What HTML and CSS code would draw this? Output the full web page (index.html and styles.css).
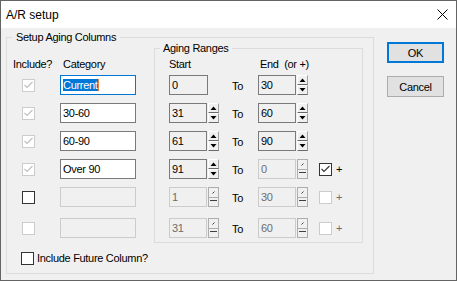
FILE: index.html
```html
<!DOCTYPE html>
<html lang="en">
<head>
  <meta charset="UTF-8" />
  <title>A/R setup</title>
  <link rel="stylesheet" href="styles.css">
</head>
<body>
  <div class="window">
    <div class="titlebar">
      <span class="title">A/R setup</span>
      <svg class="close" width="11" height="11" viewBox="0 0 11 11">
        <path d="M0.5 0.5 L10.5 10.5 M10.5 0.5 L0.5 10.5" stroke="#000" stroke-width="1" fill="none"/>
      </svg>
    </div>

    <div class="client">
      <fieldset class="group group-columns">
        <legend>Setup Aging Columns</legend>
        <div class="cols">
          <div class="cat-col">
            <div class="head">
              <span class="h-include">Include?</span>
              <span>Category</span>
            </div>
            <div class="row">
              <span class="chk chk-dis"><svg viewBox="0 0 11 11"><polyline points="1.5,5 4,7.5 9.5,2" /></svg></span>
              <span class="field field-focus"><span class="sel">Current</span></span>
            </div>
            <div class="row">
              <span class="chk chk-dis"><svg viewBox="0 0 11 11"><polyline points="1.5,5 4,7.5 9.5,2" /></svg></span>
              <span class="field">30-60</span>
            </div>
            <div class="row">
              <span class="chk chk-dis"><svg viewBox="0 0 11 11"><polyline points="1.5,5 4,7.5 9.5,2" /></svg></span>
              <span class="field">60-90</span>
            </div>
            <div class="row">
              <span class="chk chk-dis"><svg viewBox="0 0 11 11"><polyline points="1.5,5 4,7.5 9.5,2" /></svg></span>
              <span class="field">Over 90</span>
            </div>
            <div class="row row-wide">
              <span class="chk"></span>
              <span class="field field-dis"></span>
            </div>
            <div class="row">
              <span class="chk chk-dis"></span>
              <span class="field field-dis"></span>
            </div>
          </div>

          <fieldset class="group group-ranges">
            <legend>Aging Ranges</legend>
            <div class="head">
              <span class="h-start">Start</span>
              <span>End&nbsp; (or +)</span>
            </div>

            <div class="row">
              <span class="spin"><span class="spin-val spin-val-wide">0</span></span>
              <span class="to">To</span>
              <span class="spin">
                <span class="spin-val">30</span>
                <span class="spin-btns">
                  <span class="sb"><svg viewBox="0 0 9 8"><polygon points="1.5,6 7.5,6 4.5,2.5"/></svg></span>
                  <span class="sb"><svg viewBox="0 0 9 8"><polygon points="1.5,2 7.5,2 4.5,5.5"/></svg></span>
                </span>
              </span>
            </div>

            <div class="row">
              <span class="spin">
                <span class="spin-val">31</span>
                <span class="spin-btns">
                  <span class="sb"><svg viewBox="0 0 9 8"><polygon points="1.5,6 7.5,6 4.5,2.5"/></svg></span>
                  <span class="sb"><svg viewBox="0 0 9 8"><polygon points="1.5,2 7.5,2 4.5,5.5"/></svg></span>
                </span>
              </span>
              <span class="to">To</span>
              <span class="spin">
                <span class="spin-val">60</span>
                <span class="spin-btns">
                  <span class="sb"><svg viewBox="0 0 9 8"><polygon points="1.5,6 7.5,6 4.5,2.5"/></svg></span>
                  <span class="sb"><svg viewBox="0 0 9 8"><polygon points="1.5,2 7.5,2 4.5,5.5"/></svg></span>
                </span>
              </span>
            </div>

            <div class="row">
              <span class="spin">
                <span class="spin-val">61</span>
                <span class="spin-btns">
                  <span class="sb"><svg viewBox="0 0 9 8"><polygon points="1.5,6 7.5,6 4.5,2.5"/></svg></span>
                  <span class="sb"><svg viewBox="0 0 9 8"><polygon points="1.5,2 7.5,2 4.5,5.5"/></svg></span>
                </span>
              </span>
              <span class="to">To</span>
              <span class="spin">
                <span class="spin-val">90</span>
                <span class="spin-btns">
                  <span class="sb"><svg viewBox="0 0 9 8"><polygon points="1.5,6 7.5,6 4.5,2.5"/></svg></span>
                  <span class="sb"><svg viewBox="0 0 9 8"><polygon points="1.5,2 7.5,2 4.5,5.5"/></svg></span>
                </span>
              </span>
            </div>

            <div class="row">
              <span class="spin">
                <span class="spin-val">91</span>
                <span class="spin-btns">
                  <span class="sb"><svg viewBox="0 0 9 8"><polygon points="1.5,6 7.5,6 4.5,2.5"/></svg></span>
                  <span class="sb"><svg viewBox="0 0 9 8"><polygon points="1.5,2 7.5,2 4.5,5.5"/></svg></span>
                </span>
              </span>
              <span class="to">To</span>
              <span class="spin spin-dis">
                <span class="spin-val">0</span>
                <span class="spin-btns">
                  <span class="sb"><svg viewBox="0 0 9 8"><path d="M3.5 5.5 L5.5 3.5"/></svg></span>
                  <span class="sb"><svg viewBox="0 0 9 8"><path d="M1 2.5 L8 2.5"/></svg></span>
                </span>
              </span>
              <span class="chk chk-on"><svg viewBox="0 0 11 11"><polyline points="1.5,5 4,7.5 9.5,2" /></svg></span>
              <span class="plus">+</span>
            </div>

            <div class="row row-wide">
              <span class="spin spin-dis">
                <span class="spin-val">1</span>
                <span class="spin-btns">
                  <span class="sb"><svg viewBox="0 0 9 8"><path d="M3.5 5.5 L5.5 3.5"/></svg></span>
                  <span class="sb"><svg viewBox="0 0 9 8"><path d="M1 2.5 L8 2.5"/></svg></span>
                </span>
              </span>
              <span class="to">To</span>
              <span class="spin spin-dis">
                <span class="spin-val">30</span>
                <span class="spin-btns">
                  <span class="sb"><svg viewBox="0 0 9 8"><path d="M3.5 5.5 L5.5 3.5"/></svg></span>
                  <span class="sb"><svg viewBox="0 0 9 8"><path d="M1 2.5 L8 2.5"/></svg></span>
                </span>
              </span>
              <span class="chk chk-dis"></span>
              <span class="plus plus-dis">+</span>
            </div>

            <div class="row">
              <span class="spin spin-dis">
                <span class="spin-val">31</span>
                <span class="spin-btns">
                  <span class="sb"><svg viewBox="0 0 9 8"><path d="M3.5 5.5 L5.5 3.5"/></svg></span>
                  <span class="sb"><svg viewBox="0 0 9 8"><path d="M1 2.5 L8 2.5"/></svg></span>
                </span>
              </span>
              <span class="to">To</span>
              <span class="spin spin-dis">
                <span class="spin-val">60</span>
                <span class="spin-btns">
                  <span class="sb"><svg viewBox="0 0 9 8"><path d="M3.5 5.5 L5.5 3.5"/></svg></span>
                  <span class="sb"><svg viewBox="0 0 9 8"><path d="M1 2.5 L8 2.5"/></svg></span>
                </span>
              </span>
              <span class="chk chk-dis"></span>
              <span class="plus plus-dis">+</span>
            </div>
          </fieldset>
        </div>

        <div class="future">
          <span class="chk"></span>
          <span class="future-label">Include Future Column?</span>
        </div>
      </fieldset>

      <div class="buttons">
        <button class="btn btn-default">OK</button>
        <button class="btn">Cancel</button>
      </div>
    </div>
  </div>
</body>
</html>
```

FILE: styles.css
```css
* {
  margin: 0;
  padding: 0;
  box-sizing: border-box;
}

body {
  font-family: 'Liberation Sans', Arial, sans-serif;
  font-size: 11px;
  letter-spacing: -0.3px;
  color: #000;
  background: #fff;
}

.window {
  width: 457px;
  height: 281px;
  border: 1px solid #646464;
  background: #f0f0f0;
  display: flex;
  flex-direction: column;
}

.titlebar {
  height: 27px;
  flex-shrink: 0;
  background: #fff;
  display: flex;
  align-items: center;
  justify-content: space-between;
  padding: 0 8px 0 5px;
}

.title {
  font-size: 12px;
  line-height: 14px;
  letter-spacing: 0;
}

.close {
  display: block;
}

.client {
  display: flex;
  align-items: flex-start;
  padding: 3px 0 0 5px;
}

/* group boxes */
.group {
  border: 1px solid #dcdcdc;
  min-width: 0;
}

.group legend {
  line-height: 13px;
}

.group-columns {
  width: 368px;
  padding: 0 0 8px 0;
}

.group-columns > legend {
  margin-left: 5px;
  padding: 0 4px;
}

.cols {
  display: flex;
  align-items: flex-start;
}

.head {
  display: flex;
  line-height: 13px;
  margin-bottom: 4px;
}

.row {
  display: flex;
  align-items: center;
  height: 20px;
  margin-bottom: 8px;
}

.row:last-child {
  margin-bottom: 0;
}

.row-wide {
  margin-bottom: 11px;
}

/* left: include + category */
.cat-col {
  width: 147px;
  padding-top: 14px;
}

.cat-col .head {
  padding-left: 6px;
}

.h-include {
  width: 50px;
}

.cat-col .row {
  padding-left: 15px;
}

.cat-col .chk {
  margin-right: 25px;
}

.field {
  width: 76px;
  height: 20px;
  border: 1px solid #7a7a7a;
  background: #fff;
  padding-left: 2px;
  display: flex;
  align-items: center;
  line-height: 13px;
}

.field-focus {
  border-color: #0078d7;
}

.sel {
  background: #0078d7;
  color: #fff;
  line-height: 12px;
  border-right: 1px solid #e8823a;
}

.field-dis {
  border-color: #cccccc;
  background: #f0f0f0;
}

/* right: aging ranges */
.group-ranges {
  width: 209px;
  padding: 5px 0 4px 14px;
}

.group-ranges > legend {
  margin-left: -9px;
  padding: 0 3px;
  line-height: 9px;
}

.h-start {
  width: 91px;
}

.spin {
  width: 50px;
  height: 20px;
  display: flex;
  gap: 1px;
}

.spin-val {
  width: 38px;
  height: 20px;
  border: 1px solid #7a7a7a;
  background: #f0f0f0;
  padding-left: 2px;
  display: flex;
  align-items: center;
  line-height: 13px;
}

.spin-val-wide {
  width: 39px;
}

.spin-btns {
  width: 11px;
  height: 20px;
  display: flex;
  flex-direction: column;
}

.sb {
  flex: 1;
  display: flex;
  align-items: center;
  justify-content: center;
  background: #f0f0f0;
  border-top: 1px solid #fff;
  border-left: 1px solid #fff;
  border-right: 1px solid #a0a0a0;
  border-bottom: 1px solid #696969;
}

.sb svg {
  width: 9px;
  height: 8px;
  display: block;
  fill: #000;
}

.spin-dis .spin-val {
  border-color: #cccccc;
  color: #6d6d6d;
}

.spin-dis .sb {
  border: 1px solid #adadad;
}

.spin-dis .sb + .sb {
  border-top: 0;
}

.spin-dis .sb svg {
  fill: none;
  stroke: #404040;
  stroke-width: 1;
}

.to {
  width: 39px;
  padding-left: 13px;
  line-height: 13px;
  padding-top: 2px;
}

.plus {
  margin-left: 4px;
  line-height: 13px;
}

.plus-dis {
  color: #6d6d6d;
}

.group-ranges .chk {
  margin-left: 11px;
}

/* checkboxes */
.chk {
  width: 13px;
  height: 13px;
  flex-shrink: 0;
  border: 1px solid #333;
  background: #fff;
  display: flex;
}

.chk svg {
  width: 11px;
  height: 11px;
  fill: none;
  stroke: #333;
  stroke-width: 1.1;
}

.chk-dis {
  border-color: #cccccc;
  background: #fff;
}

.chk-dis svg {
  stroke: #bfbfbf;
}

.future {
  display: flex;
  align-items: center;
  margin-top: 9px;
  padding-left: 14px;
  line-height: 13px;
}

.future-label {
  margin-left: 3px;
}

/* buttons */
.buttons {
  display: flex;
  flex-direction: column;
  gap: 13px;
  margin: 11px 0 0 13px;
}

.btn {
  width: 57px;
  height: 21px;
  font-family: inherit;
  font-size: 11px;
  letter-spacing: -0.3px;
  color: #000;
  background: #e1e1e1;
  border: 1px solid #adadad;
}

.btn-default {
  border: 2px solid #0078d7;
}
```
